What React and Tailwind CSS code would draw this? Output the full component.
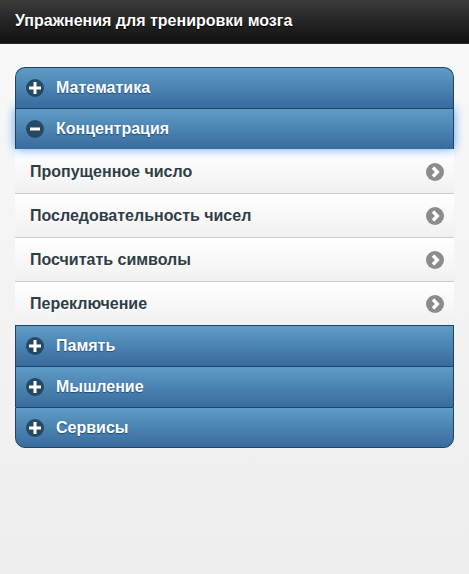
import { useState } from "react";

const sections = [
    { title: "Математика", items: [] },
    {
        title: "Концентрация",
        items: ["Пропущенное число", "Последовательность чисел", "Посчитать символы", "Переключение"],
    },
    { title: "Память", items: [] },
    { title: "Мышление", items: [] },
    { title: "Сервисы", items: [] },
];

const ToggleIcon = ({ open }) => (
    <svg className="size-[18px] shrink-0" viewBox="0 0 18 18" aria-hidden="true">
        <circle cx="9" cy="9" r="9" fill="#1f3f58" fillOpacity="0.85" />
        <path d={open ? "M4 9H14" : "M3 9H15M9 3V15"} stroke="#fff" strokeWidth="3" />
    </svg>
);

const ArrowIcon = () => (
    <svg className="size-[18px] shrink-0" viewBox="0 0 18 18" aria-hidden="true">
        <circle cx="9" cy="9" r="9" fill="#8c8c8c" />
        <path d="M7 4.5L11.3 9L7 13.5" fill="none" stroke="#fff" strokeWidth="3.4" />
    </svg>
);

const Section = ({ title, items, open, onToggle }) => (
    <section className="group">
        <h2>
            <button
                type="button"
                aria-expanded={open}
                onClick={onToggle}
                className={`relative flex h-[41px] w-full items-center gap-3 border-x border-t border-[#1b4565] bg-linear-to-b from-[#5f9cc5] to-[#396b9e] px-[10px] text-left text-white text-shadow-[0_1px_1px_#194b7e] group-first:rounded-t-[10px] group-last:rounded-b-[10px] group-last:border-b ${
                    open ? "z-10 shadow-[0_0_10px_#5ba3ea]" : "z-20"
                }`}
            >
                <ToggleIcon open={open} />
                {title}
            </button>
        </h2>
        {open && (
            <ul>
                {items.map((item) => (
                    <li
                        key={item}
                        className="border-t border-[#cccccc] bg-linear-to-b from-white to-[#f1f1f1] first:border-white"
                    >
                        <a
                            href="#"
                            className="flex h-[43px] items-center justify-between pr-[10px] pl-[15px] text-[#2f3e46] text-shadow-[0_1px_0_#ffffff]"
                        >
                            {item}
                            <ArrowIcon />
                        </a>
                    </li>
                ))}
            </ul>
        )}
    </section>
);

const App = () => {
    const [openIndex, setOpenIndex] = useState(1);

    return (
        <div className="min-h-screen bg-linear-to-b from-[#f9f9f9] to-[#eeeeee] font-['Liberation_Sans',Arial,sans-serif] text-base font-bold">
            <header className="flex h-11 items-center border-b border-[#2a2a2a] bg-linear-to-b from-[#3c3c3c] to-[#111111] px-[15px] pb-0.5 text-white text-shadow-[0_1px_1px_#000000]">
                <h1>Упражнения для тренировки мозга</h1>
            </header>
            <main className="px-[15px] pt-[23px] pb-6">
                {sections.map((section, index) => (
                    <Section
                        key={section.title}
                        title={section.title}
                        items={section.items}
                        open={openIndex === index}
                        onToggle={() => setOpenIndex(openIndex === index ? -1 : index)}
                    />
                ))}
            </main>
        </div>
    );
};

export default App;
